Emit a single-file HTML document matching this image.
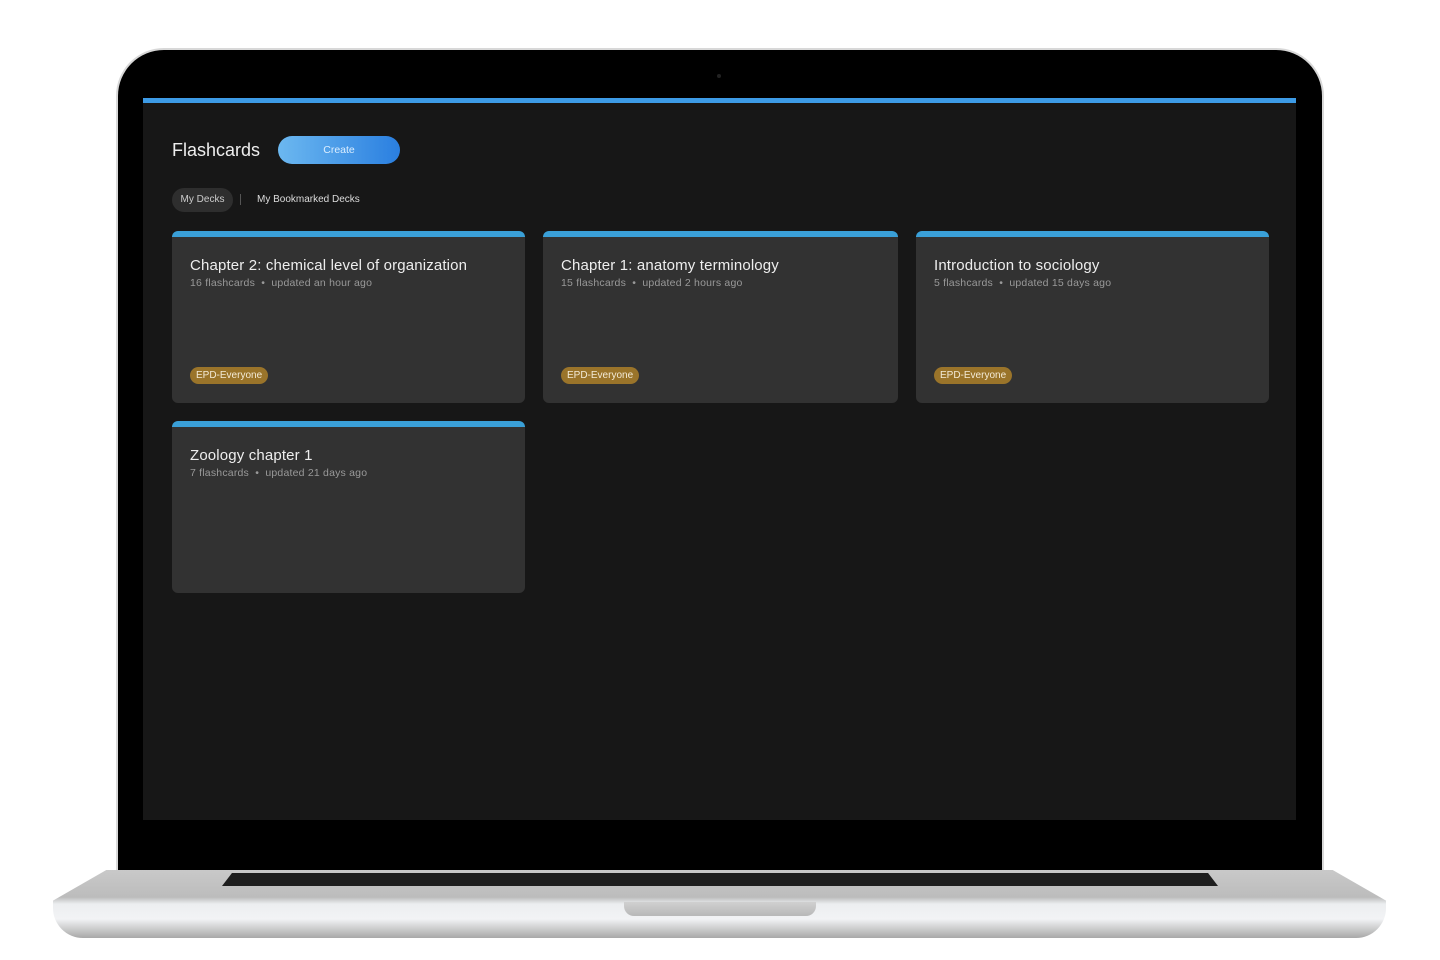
<!DOCTYPE html><html><head><style>
body{margin:0;width:1440px;height:960px;background:#fff;position:relative;overflow:hidden;font-family:"Liberation Sans",sans-serif}
.abs{position:absolute}
.lid{left:116px;top:48px;width:1208px;height:830px;background:#000;border-radius:48px 48px 0 0;border:2px solid #d8d8d8;border-bottom:none;box-sizing:border-box}
.screen{left:143px;top:98px;width:1153px;height:722px;background:#171717;border-top:5px solid #3d9be6;box-sizing:border-box}
.base{left:53px;top:870px;width:1333px;height:68px;border-radius:0 0 30px 30px;background:linear-gradient(#c9c9c9 0,#bcbcbc 40%,#eceef0 50%,#f2f3f5 72%,#a8a8a8 100%);clip-path:polygon(4% 0,96% 0,100% 45%,100% 100%,0 100%,0 45%)}
.kb{left:222px;top:873px;width:996px;height:13px;background:#1e1e1e;clip-path:polygon(1% 0,99% 0,100% 100%,0 100%)}
.notch{left:624px;top:902px;width:192px;height:14px;background:linear-gradient(#d0d0d0,#b8b8b8);border-radius:0 0 10px 10px}
.card{width:353px;height:172px;background:#323232;border-radius:6px;border-top:6px solid #3aa0d8;box-sizing:border-box}
.t{position:absolute;left:18px;top:20px;color:#eee;font-size:15px;letter-spacing:0.15px}
.s{position:absolute;left:18px;top:40px;color:#999;font-size:10.5px;letter-spacing:0.2px}
.b{position:absolute;left:18px;top:130px;background:#9a742a;color:#f3ead6;font-size:10px;padding:3px 6px;border-radius:9px}
</style></head><body>
<div class="abs lid"></div>
<div class="abs" style="left:717px;top:74px;width:4px;height:4px;border-radius:50%;background:#222"></div>
<div class="abs screen">
<div class="abs" style="left:29px;top:37px;color:#eee;font-size:18px">Flashcards</div>
<div class="abs" style="left:135px;top:33px;width:122px;height:28px;border-radius:14px;background:linear-gradient(90deg,#6cb8f0,#2a7fe0);color:#dbeeff;font-size:10.5px;text-align:center;line-height:28px">Create</div>
<div class="abs" style="left:29px;top:85px;width:61px;height:24px;border-radius:12px;background:#2e2e2e;color:#ccc;font-size:10px;text-align:center;line-height:24px">My Decks</div>
<div class="abs" style="left:97px;top:91px;width:1px;height:11px;background:#555"></div>
<div class="abs" style="left:114px;top:85px;color:#ddd;font-size:10px;line-height:24px">My Bookmarked Decks</div>
<div class="abs card" style="left:29px;top:128px"><div class="t">Chapter 2: chemical level of organization</div><div class="s">16 flashcards &nbsp;•&nbsp; updated an hour ago</div><div class="b">EPD-Everyone</div></div>
<div class="abs card" style="left:400px;top:128px;width:355px"><div class="t">Chapter 1: anatomy terminology</div><div class="s">15 flashcards &nbsp;•&nbsp; updated 2 hours ago</div><div class="b">EPD-Everyone</div></div>
<div class="abs card" style="left:773px;top:128px"><div class="t">Introduction to sociology</div><div class="s">5 flashcards &nbsp;•&nbsp; updated 15 days ago</div><div class="b">EPD-Everyone</div></div>
<div class="abs card" style="left:29px;top:318px"><div class="t">Zoology chapter 1</div><div class="s">7 flashcards &nbsp;•&nbsp; updated 21 days ago</div></div>
</div>
<div class="abs base"></div>
<div class="abs kb"></div>
<div class="abs notch"></div>
</body></html>
